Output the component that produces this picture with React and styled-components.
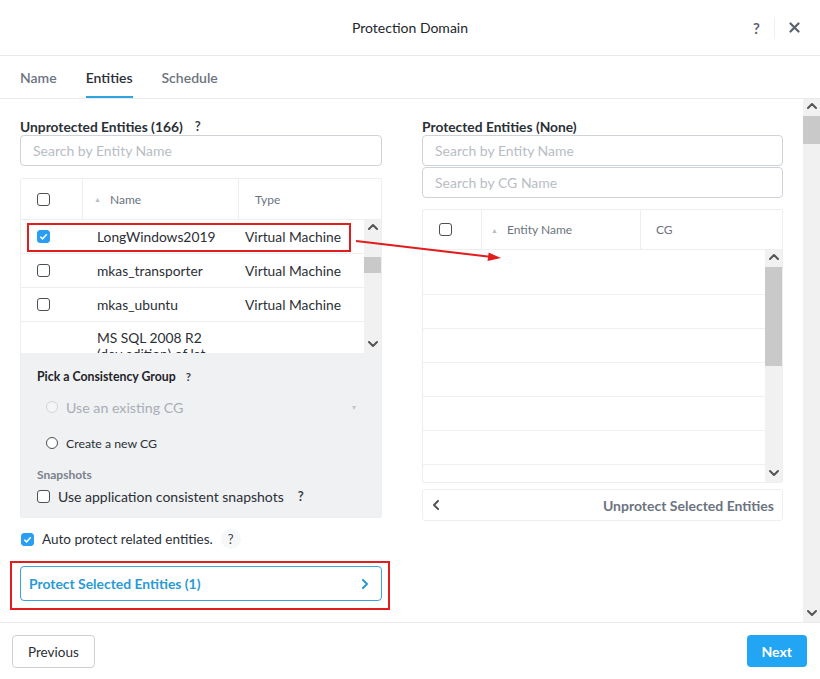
import styled, { createGlobalStyle } from "styled-components";

const GlobalStyle = createGlobalStyle`
  body {
    margin: 0;
    background: #ffffff;
    font-family: Lato, "Open Sans", "Liberation Sans", sans-serif;
    color: #2b2f36;
  }
  * { box-sizing: border-box; }
`;

const leftRows = [
  { name: "LongWindows2019", type: "Virtual Machine", checked: true, marked: true },
  { name: "mkas_transporter", type: "Virtual Machine" },
  { name: "mkas_ubuntu", type: "Virtual Machine" },
  { name: "MS SQL 2008 R2 (dev edition) of lat", type: "", noBox: true },
];

const rightRowHeights = [45, 34, 34, 34, 34, 34, 34];

const Chevron = ({ dir = "up", size = 10, color = "#555" }) => {
  const pts = {
    up: "1,6 5,2 9,6",
    down: "1,2 5,6 9,2",
    left: "6,1 2,5 6,9",
    right: "2,1 6,5 2,9",
  }[dir];
  return (
    <svg width={size} height={size} viewBox="0 0 10 10">
      <polyline points={pts} fill="none" stroke={color} strokeWidth="2" strokeLinecap="round" strokeLinejoin="round" />
    </svg>
  );
};

const Checkbox = ({ checked }) => (
  <Box $checked={checked}>
    {checked && (
      <svg width="9" height="9" viewBox="0 0 10 10">
        <polyline points="1.5,5.2 4,7.6 8.6,2.4" fill="none" stroke="#fff" strokeWidth="1.7" />
      </svg>
    )}
  </Box>
);

const Scrollbar = ({ offset, size }) => (
  <ScrollTrack>
    <ScrollBtn><Chevron dir="up" /></ScrollBtn>
    <ScrollThumb $offset={offset} $size={size} />
    <ScrollSpacer />
    <ScrollBtn><Chevron dir="down" /></ScrollBtn>
  </ScrollTrack>
);

const App = () => {
  return (
    <Dialog>
      <GlobalStyle />
      <Header>
        <span />
        <Title>Protection Domain</Title>
        <HeaderTools>
          <HeaderHelp>?</HeaderHelp>
          <ToolDivider />
          <svg width="11" height="11" viewBox="0 0 11 11">
            <path d="M1.5 1.5 L9.5 9.5 M9.5 1.5 L1.5 9.5" stroke="#5a6270" strokeWidth="2.2" strokeLinecap="round" />
          </svg>
        </HeaderTools>
      </Header>

      <Tabs>
        <Tab>Name</Tab>
        <Tab $active>Entities</Tab>
        <Tab>Schedule</Tab>
      </Tabs>

      <BodyRow>
        <Content>
          <Column>
            <SectionLabel>
              Unprotected Entities (166)<Help>?</Help>
            </SectionLabel>
            <SearchInput placeholder="Search by Entity Name" readOnly />

            <Card $mt={12}>
              <TableHead $cols="62px 156px 1fr" $h={41}>
                <HeadCell $pl={16} $divider><Checkbox /></HeadCell>
                <HeadCell $pl={11} $divider><SortMark>▲</SortMark>Name</HeadCell>
                <HeadCell $pl={16}>Type</HeadCell>
              </TableHead>
              <TableBody $h={133}>
                <RowList>
                  {leftRows.map((r) => (
                    <EntityRow key={r.name} $tall={r.noBox}>
                      <Cell $pl={16}>{!r.noBox && <Checkbox checked={r.checked} />}</Cell>
                      <Cell $pl={14} $pr={16}>{r.name}</Cell>
                      <Cell $pl={6}>{r.type}</Cell>
                      {r.marked && <RowMark />}
                    </EntityRow>
                  ))}
                </RowList>
                <Scrollbar offset={21} size={16} />
              </TableBody>

              <CGPanel>
                <PanelTitle>
                  Pick a Consistency Group<Help $small>?</Help>
                </PanelTitle>
                <RadioRow $mt={10} $disabled>
                  <RadioLabel>
                    <Radio $disabled />
                    Use an existing CG
                  </RadioLabel>
                  <Caret>▾</Caret>
                </RadioRow>
                <RadioRow $mt={12}>
                  <RadioLabel $small>
                    <Radio />
                    Create a new CG
                  </RadioLabel>
                </RadioRow>
                <PanelSub>Snapshots</PanelSub>
                <CheckRow $mt={3} $size={14}>
                  <Checkbox />
                  Use application consistent snapshots<Help>?</Help>
                </CheckRow>
              </CGPanel>
            </Card>

            <CheckRow $mt={11} $pl={1}>
              <Checkbox checked />
              Auto protect related entities.<HelpBubble>?</HelpBubble>
            </CheckRow>

            <ProtectButton>
              Protect Selected Entities (1)
              <Chevron dir="right" color="#2a9ad6" />
              <ButtonMark />
            </ProtectButton>
          </Column>

          <Column>
            <SectionLabel>Protected Entities (None)</SectionLabel>
            <SearchInput placeholder="Search by Entity Name" readOnly />
            <SearchInput placeholder="Search by CG Name" readOnly $mt={1} />

            <Card $mt={11}>
              <TableHead $cols="59px 159px 1fr" $h={40}>
                <HeadCell $pl={16} $divider><Checkbox /></HeadCell>
                <HeadCell $pl={9} $divider><SortMark>▲</SortMark>Entity Name</HeadCell>
                <HeadCell $pl={15}>CG</HeadCell>
              </TableHead>
              <TableBody $h={232}>
                <RowList>
                  {rightRowHeights.map((h, i) => (
                    <EmptyRow key={i} $h={h} />
                  ))}
                </RowList>
                <Scrollbar offset={1} size={99} />
              </TableBody>
            </Card>

            <UnprotectButton>
              <Chevron dir="left" color="#555" />
              Unprotect Selected Entities
            </UnprotectButton>
          </Column>
        </Content>
        <Scrollbar offset={1} size={28} />
      </BodyRow>

      <Footer>
        <SecondaryButton>Previous</SecondaryButton>
        <PrimaryButton>Next</PrimaryButton>
      </Footer>

      <Annotation width="820" height="679" viewBox="0 0 820 679">
        <line x1="356" y1="241" x2="490" y2="256.8" stroke="#e11d1d" strokeWidth="2" />
        <polygon points="501,258 487.6,261 488.6,252.6" fill="#e11d1d" />
      </Annotation>
    </Dialog>
  );
};

const Dialog = styled.div`
  position: relative;
  width: 820px;
  height: 679px;
  background: #fff;
  display: flex;
  flex-direction: column;
  overflow: hidden;
`;

const Header = styled.div`
  height: 56px;
  flex-shrink: 0;
  display: grid;
  grid-template-columns: 1fr auto 1fr;
  align-items: center;
  border-bottom: 1px solid #e8eaed;
`;

const Title = styled.div`
  font-size: 14px;
  color: #22262c;
`;

const HeaderTools = styled.div`
  justify-self: end;
  display: flex;
  align-items: center;
  gap: 14px;
  padding-right: 20px;
`;

const HeaderHelp = styled.span`
  font-size: 15px;
  font-weight: 700;
  color: #5f6673;
`;

const ToolDivider = styled.span`
  width: 1px;
  height: 22px;
  background: #eef0f2;
`;

const Tabs = styled.div`
  height: 43px;
  flex-shrink: 0;
  display: flex;
  gap: 29px;
  padding-left: 20px;
  border-bottom: 1px solid #e8eaed;
`;

const Tab = styled.div`
  display: flex;
  align-items: center;
  padding-top: 2px;
  font-size: 14px;
  font-weight: 600;
  color: ${({ $active }) => ($active ? "#2b2f36" : "#6c7482")};
  border-bottom: 2px solid ${({ $active }) => ($active ? "#2ea3dc" : "transparent")};
`;

const BodyRow = styled.div`
  flex: 1;
  min-height: 0;
  display: flex;
`;

const Content = styled.div`
  flex: 1;
  overflow: hidden;
  padding: 19px 20px 0;
  display: grid;
  grid-template-columns: 362px 361px;
  column-gap: 40px;
  align-items: start;
`;

const Column = styled.div`
  display: flex;
  flex-direction: column;
`;

const SectionLabel = styled.div`
  font-size: 13.8px;
  font-weight: 700;
  line-height: 17px;
  color: #2b2f36;
  display: flex;
  align-items: center;
`;

const Help = styled.span`
  margin-left: ${({ $small }) => ($small ? "10px" : "12px")};
  font-size: ${({ $small }) => ($small ? "11.5px" : "13px")};
  font-weight: 700;
  color: #3a3f47;
`;

const HelpBubble = styled.span`
  width: 20px;
  height: 20px;
  border-radius: 50%;
  background: #f6f7f8;
  display: inline-flex;
  align-items: center;
  justify-content: center;
  font-size: 13px;
  color: #3a3f47;
`;

const SearchInput = styled.input`
  height: 31px;
  margin-top: ${({ $mt = 0 }) => $mt}px;
  border: 1px solid #cfd3d8;
  border-radius: 4px;
  padding: 0 12px;
  font-family: inherit;
  font-size: 14px;
  outline: none;
  &::placeholder {
    color: #b8bdc4;
  }
`;

const Card = styled.div`
  margin-top: ${({ $mt }) => $mt}px;
  border: 1px solid #eceef0;
  border-radius: 2px;
  display: flex;
  flex-direction: column;
`;

const TableHead = styled.div`
  height: ${({ $h }) => $h}px;
  display: grid;
  grid-template-columns: ${({ $cols }) => $cols};
  border-bottom: 1px solid #eceef0;
`;

const HeadCell = styled.div`
  display: flex;
  align-items: center;
  padding-left: ${({ $pl }) => $pl}px;
  font-size: 12px;
  color: #6c7380;
  border-right: ${({ $divider }) => ($divider ? "1px solid #eceef0" : "none")};
`;

const SortMark = styled.span`
  font-size: 7px;
  color: #b9bec5;
  margin-right: 9px;
`;

const TableBody = styled.div`
  height: ${({ $h }) => $h}px;
  display: flex;
  overflow: hidden;
`;

const RowList = styled.div`
  flex: 1;
  overflow: hidden;
`;

const EntityRow = styled.div`
  position: relative;
  display: grid;
  grid-template-columns: 62px 156px 1fr;
  align-items: ${({ $tall }) => ($tall ? "start" : "center")};
  min-height: 34px;
  padding: ${({ $tall }) => ($tall ? "8px 0" : "0")};
  border-bottom: 1px solid #eceef0;
  font-size: 13.8px;
  line-height: 16px;
  color: #2b2f36;
`;

const Cell = styled.div`
  display: flex;
  align-items: center;
  padding-left: ${({ $pl }) => $pl}px;
  padding-right: ${({ $pr = 0 }) => $pr}px;
  white-space: ${({ $pr }) => ($pr ? "normal" : "nowrap")};
`;

const RowMark = styled.div`
  position: absolute;
  left: 6px;
  right: 13px;
  top: 3px;
  bottom: 1px;
  border: 2px solid #e11d1d;
  pointer-events: none;
`;

const EmptyRow = styled.div`
  height: ${({ $h }) => $h}px;
  border-bottom: 1px solid #eef0f2;
`;

const ScrollTrack = styled.div`
  width: 17px;
  flex-shrink: 0;
  background: #f1f1f1;
  display: flex;
  flex-direction: column;
`;

const ScrollBtn = styled.div`
  height: 16px;
  display: flex;
  align-items: center;
  justify-content: center;
`;

const ScrollThumb = styled.div`
  margin-top: ${({ $offset }) => $offset}px;
  height: ${({ $size }) => $size}px;
  background: #c9c9c9;
`;

const ScrollSpacer = styled.div`
  flex: 1;
`;

const Box = styled.span`
  width: 13px;
  height: 13px;
  flex-shrink: 0;
  border-radius: 3px;
  border: 1px solid ${({ $checked }) => ($checked ? "#2a9df4" : "#4a4f57")};
  background: ${({ $checked }) => ($checked ? "#2a9df4" : "#fff")};
  display: inline-flex;
  align-items: center;
  justify-content: center;
`;

const CGPanel = styled.div`
  background: #eff1f3;
  padding: 16px 16px 11px;
  display: flex;
  flex-direction: column;
`;

const PanelTitle = styled.div`
  font-size: 12.3px;
  font-weight: 700;
  line-height: 16px;
  color: #1f2328;
  display: flex;
  align-items: center;
`;

const RadioRow = styled.div`
  margin-top: ${({ $mt }) => $mt}px;
  height: 24px;
  padding-left: 9px;
  padding-right: 9px;
  display: flex;
  align-items: center;
  justify-content: space-between;
  color: ${({ $disabled }) => ($disabled ? "#a9aeb5" : "#2b2f36")};
`;

const RadioLabel = styled.span`
  display: flex;
  align-items: center;
  gap: 8px;
  font-size: ${({ $small }) => ($small ? "12.3px" : "14.2px")};
`;

const Radio = styled.span`
  width: 12px;
  height: 12px;
  border-radius: 50%;
  border: 1px solid ${({ $disabled }) => ($disabled ? "#d3d6da" : "#4a4f57")};
  background: ${({ $disabled }) => ($disabled ? "#f4f5f6" : "#fff")};
`;

const Caret = styled.span`
  font-size: 8px;
  color: #c4c8cd;
`;

const PanelSub = styled.div`
  margin-top: 12px;
  font-size: 12px;
  font-weight: 700;
  line-height: 16px;
  color: #7a818c;
`;

const CheckRow = styled.div`
  margin-top: ${({ $mt }) => $mt}px;
  padding-left: ${({ $pl = 0 }) => $pl}px;
  height: 20px;
  display: flex;
  align-items: center;
  gap: 8px;
  font-size: ${({ $size = 13.5 }) => $size}px;
  color: #2b2f36;
  & > ${Help} {
    margin-left: 6px;
  }
`;

const ProtectButton = styled.div`
  position: relative;
  margin-top: 17px;
  height: 35px;
  border: 1px solid #3aa3dc;
  border-radius: 4px;
  padding: 0 10px 0 8px;
  display: flex;
  align-items: center;
  justify-content: space-between;
  font-size: 13.9px;
  font-weight: 700;
  color: #2a9ad6;
`;

const ButtonMark = styled.div`
  position: absolute;
  left: -11px;
  right: -9px;
  top: -6px;
  bottom: -10px;
  border: 2px solid #e11d1d;
  pointer-events: none;
`;

const UnprotectButton = styled.div`
  margin-top: 6px;
  height: 32px;
  border: 1px solid #eceef0;
  border-radius: 3px;
  padding: 0 8px 0 9px;
  display: flex;
  align-items: center;
  justify-content: space-between;
  font-size: 14px;
  font-weight: 700;
  color: #6c7380;
`;

const Footer = styled.div`
  height: 57px;
  flex-shrink: 0;
  border-top: 1px solid #e8eaed;
  padding: 12px 13px 0 12px;
  display: flex;
  justify-content: space-between;
  align-items: flex-start;
`;

const SecondaryButton = styled.div`
  height: 33px;
  padding: 0 15px;
  border: 1px solid #cdd1d6;
  border-radius: 4px;
  display: flex;
  align-items: center;
  font-size: 13.5px;
  color: #2b2f36;
`;

const PrimaryButton = styled.div`
  height: 32px;
  padding: 0 15px;
  border-radius: 4px;
  background: #22a5f2;
  display: flex;
  align-items: center;
  font-size: 14px;
  font-weight: 700;
  color: #fff;
`;

const Annotation = styled.svg`
  position: absolute;
  left: 0;
  top: 0;
  pointer-events: none;
`;

export default App;
